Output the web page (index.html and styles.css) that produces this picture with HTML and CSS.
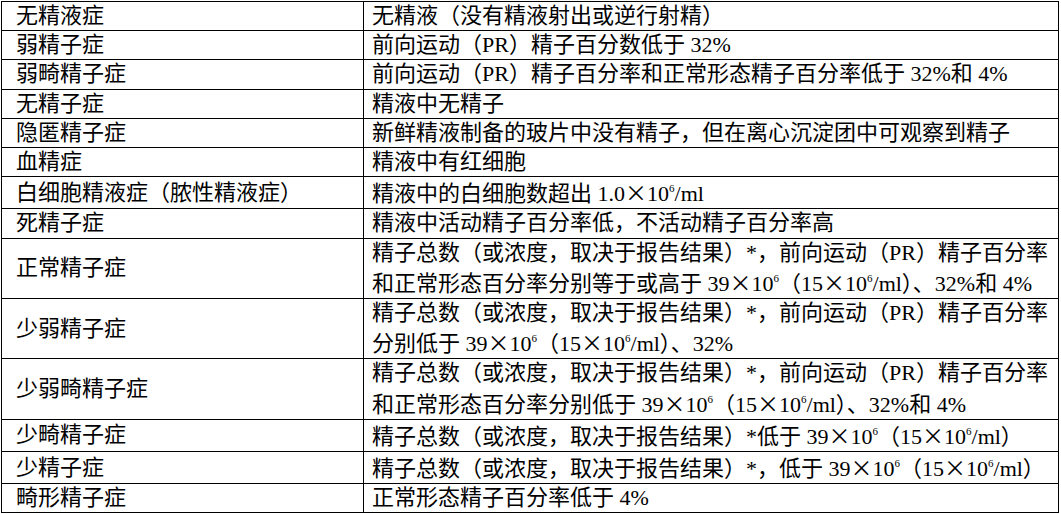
FILE: index.html
```html
<!DOCTYPE html>
<html lang="zh-CN">
<head>
<meta charset="utf-8">
<title>精液分析术语</title>
<link rel="stylesheet" href="styles.css">
</head>
<body>
<table class="terms">
  <colgroup><col class="c-name"><col class="c-desc"></colgroup>
  <tbody>
    <tr><td class="name">无精液症</td><td class="desc">无精液（没有精液射出或逆行射精）</td></tr>
    <tr><td class="name">弱精子症</td><td class="desc">前向运动（PR）精子百分数低于 32%</td></tr>
    <tr><td class="name">弱畸精子症</td><td class="desc">前向运动（PR）精子百分率和正常形态精子百分率低于 32%和 4%</td></tr>
    <tr><td class="name">无精子症</td><td class="desc">精液中无精子</td></tr>
    <tr><td class="name">隐匿精子症</td><td class="desc">新鲜精液制备的玻片中没有精子，但在离心沉淀团中可观察到精子</td></tr>
    <tr><td class="name">血精症</td><td class="desc">精液中有红细胞</td></tr>
    <tr><td class="name">白细胞精液症（脓性精液症）</td><td class="desc">精液中的白细胞数超出 1.0<span class="x">×</span>10<sup>6</sup>/ml</td></tr>
    <tr><td class="name">死精子症</td><td class="desc">精液中活动精子百分率低，不活动精子百分率高</td></tr>
    <tr><td class="name">正常精子症</td><td class="desc">精子总数（或浓度，取决于报告结果）*，前向运动（PR）精子百分率<br>和正常形态百分率分别等于或高于 39<span class="x">×</span>10<sup>6</sup>（15<span class="x">×</span>10<sup>6</sup>/ml）、32%和 4%</td></tr>
    <tr><td class="name">少弱精子症</td><td class="desc">精子总数（或浓度，取决于报告结果）*，前向运动（PR）精子百分率<br>分别低于 39<span class="x">×</span>10<sup>6</sup>（15<span class="x">×</span>10<sup>6</sup>/ml）、32%</td></tr>
    <tr><td class="name">少弱畸精子症</td><td class="desc">精子总数（或浓度，取决于报告结果）*，前向运动（PR）精子百分率<br>和正常形态百分率分别低于 39<span class="x">×</span>10<sup>6</sup>（15<span class="x">×</span>10<sup>6</sup>/ml）、32%和 4%</td></tr>
    <tr><td class="name">少畸精子症</td><td class="desc">精子总数（或浓度，取决于报告结果）*低于 39<span class="x">×</span>10<sup>6</sup>（15<span class="x">×</span>10<sup>6</sup>/ml）</td></tr>
    <tr><td class="name">少精子症</td><td class="desc">精子总数（或浓度，取决于报告结果）*，低于 39<span class="x">×</span>10<sup>6</sup>（15<span class="x">×</span>10<sup>6</sup>/ml）</td></tr>
    <tr><td class="name">畸形精子症</td><td class="desc">正常形态精子百分率低于 4%</td></tr>
  </tbody>
</table>
</body>
</html>
```

FILE: styles.css
```css
html, body {
  margin: 0;
  padding: 0;
  background: #ffffff;
}

body {
  padding: 1px 0 0 1px;
  font-family: "Liberation Serif", "Noto Sans CJK SC", serif;
  font-size: 22px;
  color: #000000;
}

.terms {
  border-collapse: collapse;
  width: 1058px;
  table-layout: fixed;
}

.c-name {
  width: 362px;
}

.terms td {
  border: 1px solid #000000;
  padding: 0;
  line-height: 28.2px;
  vertical-align: middle;
  white-space: nowrap;
  overflow: hidden;
}

.terms td.name {
  padding-left: 14px;
}

.terms td.desc {
  padding-left: 8px;
}

.x {
  font-family: "Noto Sans CJK SC", sans-serif;
  display: inline-block;
  width: 1em;
  text-align: center;
}

sup {
  font-size: 11px;
  line-height: 0;
  vertical-align: 9px;
}
```
